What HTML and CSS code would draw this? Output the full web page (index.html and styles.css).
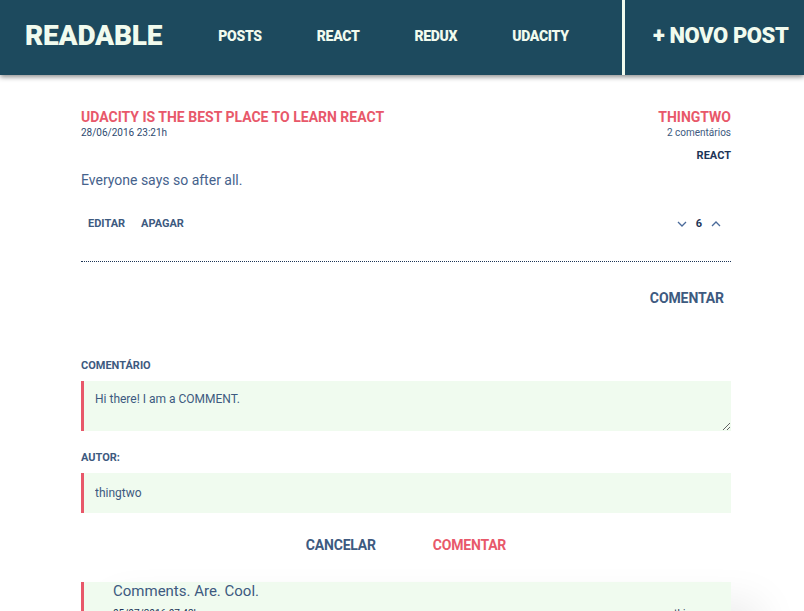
FILE: index.html
```html
<!DOCTYPE html>
<html lang="pt">
<head>
<meta charset="utf-8">
<title>Readable</title>
<link rel="stylesheet" href="styles.css">
</head>
<body>
<header class="topbar">
  <div class="brand">READABLE</div>
  <nav class="nav">
    <a class="nav-link">POSTS</a>
    <a class="nav-link">REACT</a>
    <a class="nav-link">REDUX</a>
    <a class="nav-link">UDACITY</a>
  </nav>
  <a class="new-post">+ NOVO POST</a>
</header>

<main class="content">
  <article class="post">
    <div class="post-head">
      <div class="post-left">
        <h1 class="post-title">UDACITY IS THE BEST PLACE TO LEARN REACT</h1>
        <div class="post-date">28/06/2016 23:21h</div>
      </div>
      <div class="post-right">
        <div class="post-author">THINGTWO</div>
        <div class="post-count">2 comentários</div>
        <div class="post-cat">REACT</div>
      </div>
    </div>
    <p class="post-body">Everyone says so after all.</p>
    <div class="post-actions">
      <div class="links">
        <a class="action">EDITAR</a>
        <a class="action">APAGAR</a>
      </div>
      <div class="votes">
        <svg class="chev" width="10" height="6" viewBox="0 0 10 6"><path d="M1 1l4 4 4-4" fill="none" stroke="#4a6a9a" stroke-width="1.3"/></svg>
        <span class="score">6</span>
        <svg class="chev" width="10" height="6" viewBox="0 0 10 6"><path d="M1 5l4-4 4 4" fill="none" stroke="#4a6a9a" stroke-width="1.3"/></svg>
      </div>
    </div>
  </article>

  <div class="comment-toggle"><a class="toggle-link">COMENTAR</a></div>

  <form class="comment-form">
    <label class="field-label">COMENTÁRIO</label>
    <textarea class="field field-area">Hi there! I am a COMMENT.</textarea>
    <label class="field-label">AUTOR:</label>
    <input class="field field-input" value="thingtwo">
    <div class="form-buttons">
      <a class="btn btn-cancel">CANCELAR</a>
      <a class="btn btn-submit">COMENTAR</a>
    </div>
  </form>

  <div class="comment">
    <div class="comment-text">Comments. Are. Cool.</div>
    <div class="comment-meta"><span>05/07/2016 07:42h</span><span>thingone</span></div>
  </div>
</main>
</body>
</html>
```

FILE: styles.css
```css
* { box-sizing: border-box; }
html, body { margin: 0; padding: 0; }
body {
  font-family: Roboto, "Liberation Sans", sans-serif;
  background: #fff;
  color: #3d5a80;
  overflow: hidden;
  height: 611px;
}
a { cursor: pointer; }

.topbar {
  display: flex;
  align-items: stretch;
  height: 75px;
  background: #1d4a5e;
  color: #f1fbee;
  box-shadow: 0 2px 5px rgba(0,0,0,0.45);
  position: relative;
  z-index: 2;
}
.brand {
  font-size: 28px;
  font-weight: 900;
  padding: 0 0 4px 25px;
  display: flex;
  align-items: center;
  letter-spacing: -0.2px;
}
.nav {
  display: flex;
  align-items: center;
  gap: 55px;
  margin-left: 56px;
  padding-bottom: 4px;
  flex: 1;
}
.nav-link {
  font-size: 14px;
  font-weight: 900;
  letter-spacing: -0.3px;
}
.new-post {
  width: 182px;
  border-left: 3px solid #f1fbee;
  display: flex;
  align-items: center;
  padding: 0 0 4px 28px;
  font-size: 22px;
  font-weight: 900;
  letter-spacing: -0.4px;
}

.content {
  width: 650px;
  margin-left: 81px;
  padding-top: 34px;
}
.post-head {
  display: flex;
  justify-content: space-between;
}
.post-title {
  margin: 0;
  font-size: 14px;
  font-weight: 700;
  color: #e8586a;
  line-height: 16px;
}
.post-date {
  font-size: 10px;
  margin-top: 2px;
  color: #2e4a70;
}
.post-right { text-align: right; }
.post-author {
  font-size: 14px;
  font-weight: 700;
  color: #e8586a;
  line-height: 16px;
}
.post-count {
  font-size: 10px;
  margin-top: 2px;
  color: #3d5a80;
}
.post-cat {
  font-size: 11px;
  font-weight: 700;
  color: #1d3557;
  margin-top: 11px;
}
.post-body {
  margin: 10px 0 0;
  font-size: 14px;
  color: #45628c;
}
.post-actions {
  display: flex;
  justify-content: space-between;
  align-items: center;
  margin-top: 29px;
  padding-bottom: 31px;
  border-bottom: 1px dotted #1d3557;
}
.links { display: flex; gap: 16px; padding-left: 7px; }
.action { font-size: 11px; font-weight: 700; color: #3d5a80; }
.votes { display: flex; align-items: center; gap: 9px; padding-right: 10px; }
.score { font-size: 11px; font-weight: 700; color: #1d3557; }

.comment-toggle {
  display: flex;
  justify-content: flex-end;
  padding: 28px 7px 0 0;
}
.toggle-link { font-size: 14px; font-weight: 700; color: #3d5a80; letter-spacing: -0.1px; }

.comment-form {
  display: flex;
  flex-direction: column;
  margin-top: 53px;
}
.field-label {
  font-size: 11px;
  font-weight: 700;
  color: #3d5a80;
  margin-bottom: 9px;
}
.field {
  border: none;
  border-left: 3px solid #e8586a;
  background: #f0fbef;
  font-family: Roboto, "Liberation Sans", sans-serif;
  font-size: 12px;
  color: #3d5a80;
  padding: 11px 11px;
  width: 650px;
  outline: none;
}
.field-area {
  height: 50px;
  resize: vertical;
  margin-bottom: 20px;
}
.field-input { height: 40px; }
.form-buttons {
  display: flex;
  justify-content: center;
  gap: 57px;
  margin-top: 24px;
}
.btn { font-size: 14px; font-weight: 700; letter-spacing: -0.2px; }
.btn-cancel { color: #3d5a80; }
.btn-submit { color: #e8586a; }

.comment {
  margin-top: 29px;
  border-left: 3px solid #e8586a;
  background: #f0fbef;
  padding: 0 18px 0 29px;
  box-shadow: 30px 20px 40px rgba(0,0,0,0.08);
  height: 60px;
}
.comment-text { font-size: 15px; color: #3d5a80; }
.comment-meta {
  display: flex;
  justify-content: space-between;
  font-size: 10px;
  margin-top: 8px;
  color: #1d3557;
}
```
